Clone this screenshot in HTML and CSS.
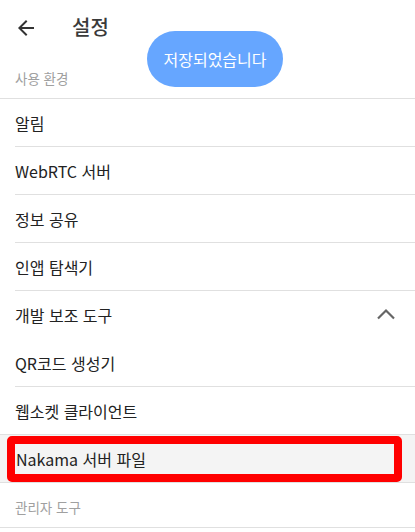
FILE: index.html
```html
<!DOCTYPE html>
<html lang="ko">
<head>
<meta charset="utf-8">
<link rel="stylesheet" href="styles.css">
</head>
<body>
<div class="page">
  <header class="topbar">
    <svg class="back" width="24" height="24" viewBox="0 0 24 24"><path d="M20 11H7.83l5.59-5.59L12 4l-8 8 8 8 1.41-1.41L7.83 13H20v-2z" fill="#333"/></svg>
    <h1 class="title">설정</h1>
  </header>
  <div class="section">사용 환경</div>
  <div class="row inset">알림</div>
  <div class="row inset">WebRTC 서버</div>
  <div class="row inset">정보 공유</div>
  <div class="row inset">인앱 탐색기</div>
  <div class="row inset noline">
    <span class="grow">개발 보조 도구</span>
    <svg class="chev" width="20" height="12" viewBox="0 0 20 12"><polyline points="2,10.5 10,2.5 18,10.5" fill="none" stroke="#666" stroke-width="2.2"/></svg>
  </div>
  <div class="row inset">QR코드 생성기</div>
  <div class="row inset full">웹소켓 클라이언트</div>
  <div class="row selected">Nakama 서버 파일</div>
  <div class="section">관리자 도구</div>
  <div class="toast">저장되었습니다</div>
  <div class="mark"></div>
</div>
</body>
</html>
```
FILE: styles.css
```css
html, body {
  margin: 0;
  padding: 0;
  background: #fff;
}
body {
  font-family: "Noto Sans CJK KR", "Noto Sans", sans-serif;
  color: #222;
}
.page {
  position: relative;
  width: 415px;
  height: 532px;
  overflow: hidden;
}
.topbar {
  height: 54px;
  display: flex;
  align-items: center;
  padding-left: 14px;
  box-sizing: border-box;
}
.back {
  display: block;
  margin-top: 1px;
}
.title {
  margin: 0 0 0 34px;
  font-size: 20px;
  font-weight: 500;
  color: #3a3a3a;
  line-height: 24px;
}
.section {
  height: 45px;
  box-sizing: border-box;
  display: flex;
  align-items: flex-end;
  padding: 0 15px 10px;
  font-size: 13.5px;
  line-height: 19px;
  color: #a0a0a0;
  border-bottom: 1px solid #e0e0e0;
}
.row {
  height: 48px;
  box-sizing: border-box;
  display: flex;
  align-items: center;
  font-size: 16px;
  line-height: 20px;
  border-bottom: 1px solid #e0e0e0;
}
.inset {
  margin-left: 15px;
  padding-right: 19px;
}
.noline {
  border-bottom-color: transparent;
}
.full {
  margin-left: 0;
  padding-left: 15px;
}
.grow {
  flex: 1;
}
.chev {
  display: block;
  margin-top: -1px;
}
.selected {
  background: #f4f4f4;
  padding-left: 16px;
}
.toast {
  position: absolute;
  left: 147px;
  top: 31px;
  width: 136px;
  height: 56px;
  border-radius: 28px;
  background: #66a6ff;
  color: #fff;
  font-size: 16px;
  display: flex;
  align-items: center;
  justify-content: center;
}
.mark {
  position: absolute;
  left: 7px;
  top: 436px;
  width: 395px;
  height: 46px;
  box-sizing: border-box;
  border: 8px solid #ff0000;
  border-radius: 5px;
}
```
